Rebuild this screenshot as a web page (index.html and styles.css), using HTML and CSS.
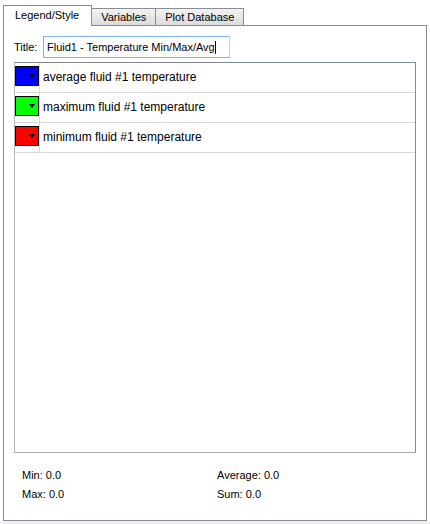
FILE: index.html
```html
<!DOCTYPE html>
<html>
<head>
<meta charset="utf-8">
<link rel="stylesheet" href="styles.css">
</head>
<body>
<div class="window">
  <div class="tabs">
    <div class="tab active">Legend/Style</div>
    <div class="tab">Variables</div>
    <div class="tab">Plot Database</div>
  </div>
  <div class="pane">
    <div class="title-row">
      <span class="label">Title:</span>
      <div class="textbox"><span>Fluid1 - Temperature Min/Max/Avg</span><span class="caret"></span></div>
    </div>
    <div class="list">
      <div class="row">
        <div class="swatch-cell"><div class="swatch blue"><span class="arrow"></span></div></div>
        <div class="row-text">average fluid #1 temperature</div>
      </div>
      <div class="row">
        <div class="swatch-cell"><div class="swatch green"><span class="arrow"></span></div></div>
        <div class="row-text">maximum fluid #1 temperature</div>
      </div>
      <div class="row">
        <div class="swatch-cell"><div class="swatch red"><span class="arrow"></span></div></div>
        <div class="row-text">minimum fluid #1 temperature</div>
      </div>
    </div>
    <div class="stats">
      <div>Min: 0.0</div>
      <div>Average: 0.0</div>
      <div>Max: 0.0</div>
      <div>Sum: 0.0</div>
    </div>
  </div>
</div>
</body>
</html>
```
FILE: styles.css
```css
html, body {
  margin: 0;
  padding: 0;
  background: #f0f0f0;
}
body {
  font-family: "Liberation Sans", Arial, sans-serif;
  font-size: 11px;
  color: #000;
}
.window {
  width: 430px;
  height: 521px;
  background: #fff;
  box-sizing: border-box;
  padding: 5px 0 0 3px;
}
.tabs {
  display: flex;
  align-items: flex-end;
  height: 20px;
}
.tab {
  box-sizing: border-box;
  height: 17px;
  line-height: 16px;
  padding: 0 9px;
  border: 1px solid #898c95;
  border-bottom: none;
  border-left: none;
  background: linear-gradient(#f2f2f2, #dcdcdc);
  white-space: nowrap;
}
.tab.active {
  height: 21px;
  line-height: 19px;
  padding: 0 12px 0 11px;
  border-left: 1px solid #898c95;
  background: #fff;
  margin-bottom: -1px;
  position: relative;
  z-index: 1;
}
.pane {
  box-sizing: border-box;
  width: 424px;
  height: 496px;
  border: 1px solid #898c95;
  background: #fff;
  padding: 10px 10px 0 10px;
}
.title-row {
  display: flex;
  align-items: center;
  height: 22px;
}
.label {
  width: 29px;
}
.textbox {
  box-sizing: border-box;
  width: 187px;
  height: 22px;
  border: 1px solid #7eb4ea;
  border-right-color: #b7d5f2;
  display: flex;
  align-items: center;
  padding-left: 3px;
  white-space: nowrap;
}
.caret {
  display: inline-block;
  width: 1px;
  height: 13px;
  background: #000;
}
.list {
  box-sizing: border-box;
  margin-top: 4px;
  width: 402px;
  height: 391px;
  border: 1px solid #828790;
  border-left-color: #b4b6ba;
  border-bottom-color: #a9abb0;
}
.row {
  display: flex;
  height: 30px;
  box-sizing: border-box;
  border-bottom: 1px solid #d9d9d9;
}
.swatch-cell {
  width: 24px;
  border-right: 1px solid #d9d9d9;
  padding-top: 3px;
}
.swatch {
  box-sizing: border-box;
  width: 24px;
  height: 20px;
  border: 1px solid #000;
  display: flex;
  justify-content: flex-end;
  align-items: center;
  padding-right: 3px;
}
.swatch.blue { background: #0000ff; }
.swatch.green { background: #00ff00; }
.swatch.red { background: #ff0000; }
.arrow {
  width: 0;
  height: 0;
  border-left: 3px solid transparent;
  border-right: 3px solid transparent;
  border-top: 4px solid #000;
}
.row-text {
  padding-left: 3px;
  font-size: 12px;
  line-height: 29px;
  white-space: nowrap;
}
.stats {
  display: grid;
  grid-template-columns: 195px auto;
  padding: 13px 0 0 8px;
  line-height: 19px;
}
```
